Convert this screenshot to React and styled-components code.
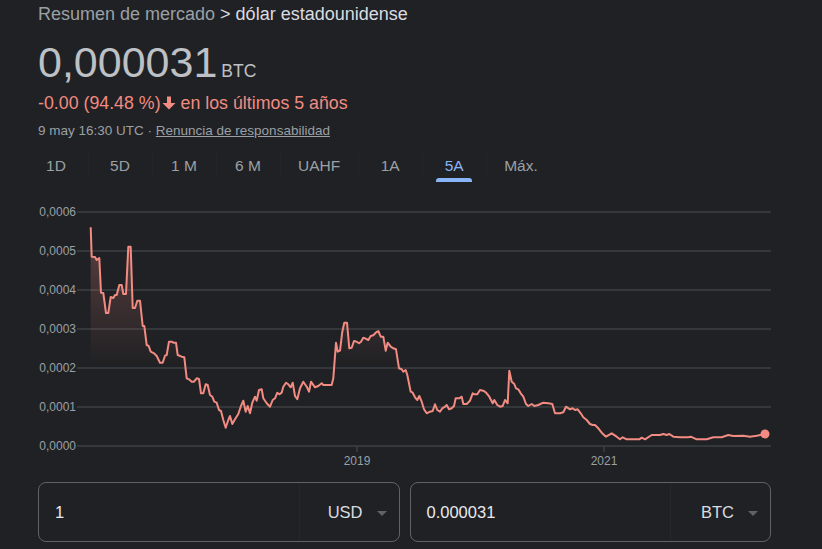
import React from 'react';
import styled, { createGlobalStyle } from 'styled-components';

const GlobalStyle = createGlobalStyle`
  html, body {
    margin: 0;
    padding: 0;
    background: #202124;
  }
  body {
    font-family: "Liberation Sans", Arial, sans-serif;
    color: #bdc1c6;
  }
`;

const Page = styled.div`
  width: 822px;
  height: 549px;
  overflow: hidden;
  background: #202124;
  display: flex;
  flex-direction: column;
`;

const Header = styled.div`
  padding: 2px 0 0 38px;
  display: flex;
  flex-direction: column;
`;

const Crumbs = styled.div`
  font-size: 18px;
  line-height: 24px;
  color: #9aa0a6;
  white-space: nowrap;

  span {
    color: #dadce0;
  }
`;

const PriceRow = styled.div`
  margin-top: 12px;
  display: flex;
  align-items: baseline;
  gap: 4px;
  height: 48px;
`;

const Price = styled.span`
  font-size: 43px;
  line-height: 48px;
  color: #bdc1c6;
`;

const Unit = styled.span`
  font-size: 17.5px;
  color: #bdc1c6;
`;

const Change = styled.div`
  margin-top: 6px;
  font-size: 17.8px;
  line-height: 22px;
  color: #f28b82;
  display: flex;
  align-items: center;
  white-space: nowrap;

  svg {
    margin: 0 5px 0 1px;
  }
`;

const Stamp = styled.div`
  margin-top: 8px;
  font-size: 13.5px;
  line-height: 18px;
  color: #9aa0a6;
  white-space: nowrap;

  a {
    color: #9aa0a6;
    text-decoration: underline;
  }
`;

const Tabs = styled.div`
  margin: 6px 0 0 24px;
  display: flex;
`;

const Tab = styled.div`
  position: relative;
  min-width: 64px;
  box-sizing: border-box;
  padding: 10px 18px 6px;
  font-size: 15.5px;
  line-height: 20px;
  text-align: center;
  color: ${p => (p.active ? '#8ab4f8' : '#9aa0a6')};
  white-space: nowrap;

  &:not(:first-child)::before {
    content: '';
    position: absolute;
    left: 0;
    top: 7px;
    bottom: 5px;
    width: 1px;
    background: #242528;
  }

  &::after {
    content: '';
    display: ${p => (p.active ? 'block' : 'none')};
    position: absolute;
    left: 50%;
    bottom: 0;
    width: 36px;
    margin-left: -18px;
    height: 4px;
    border-radius: 3px 3px 0 0;
    background: #8ab4f8;
  }
`;

const Chart = styled.svg`
  display: block;
  margin-top: 8px;
  width: 822px;
  height: 285px;
`;

const Converter = styled.div`
  margin-top: 7px;
  padding: 0 51px 0 38px;
  display: flex;
  gap: 10px;
`;

const Field = styled.div`
  flex: 1;
  height: 60px;
  box-sizing: border-box;
  border: 1px solid #5f6368;
  border-radius: 8px;
  display: grid;
  grid-template-columns: 1fr 100px;
`;

const Amount = styled.div`
  padding-left: 16px;
  display: flex;
  align-items: center;
  font-size: 16.5px;
  color: #e8eaed;
`;

const Currency = styled.div`
  border-left: 1px solid #26272a;
  display: flex;
  align-items: center;
  justify-content: flex-end;
  gap: 14px;
  padding-right: 12px;
  font-size: 16.5px;
  color: #dadce0;
`;

const Caret = styled.span`
  width: 0;
  height: 0;
  border-left: 5px solid transparent;
  border-right: 5px solid transparent;
  border-top: 5px solid #5f6368;
  margin-top: 2px;
`;

const tabs = ['1D', '5D', '1 M', '6 M', 'UAHF', '1A', '5A', 'Máx.'];

const yTicks = [
  ['0,0006', 212], ['0,0005', 251], ['0,0004', 290], ['0,0003', 329],
  ['0,0002', 368], ['0,0001', 407], ['0,0000', 446],
];

const pts = [
  [90.7, 227.3], [91.7, 256.7], [95, 257], [96.7, 260], [99.3, 258], [101, 292.7], [103.3, 293],
  [106, 313], [108.3, 313], [110.7, 297], [113.3, 298], [115, 295], [116.7, 295], [119.3, 285],
  [121.7, 285], [123.3, 294], [126, 294], [128.3, 246.7], [130.7, 246.7], [132.7, 308], [135, 308],
  [137.3, 300.7], [140, 300.7], [142.7, 326], [144.3, 326], [146.7, 345], [148.7, 346], [150.7, 351.7],
  [154, 353.3], [156.7, 356], [160, 362.7], [162.7, 362.7], [165, 355.7], [166.7, 355], [169, 341.7],
  [171.7, 341.7], [173.3, 342.7], [176, 342.7], [177.7, 355], [181.7, 356.7], [184.3, 357.3],
  [186.7, 378.3], [189, 379.3], [191.7, 381.7], [194, 381.7], [196.7, 378.3], [199, 379],
  [201, 393.3], [203.3, 393.3], [205.7, 384.3], [207.7, 385], [210, 395], [212.3, 396.7],
  [214.3, 401.7], [216.7, 402.7], [219, 410], [221, 411], [223.3, 420], [225.7, 427.7], [228.3, 420],
  [230, 416], [232.3, 424], [235, 419.3], [238.3, 414], [240.7, 406.7], [243.3, 400.7], [245.7, 411.7],
  [247.7, 406], [250, 413.3], [252.3, 402.7], [255, 396.7], [256.7, 400.7], [259, 390], [261.7, 389.3],
  [263.3, 398.3], [266.7, 403.3], [270, 406.7], [272.7, 400], [275, 398.3], [277.3, 392.7],
  [279.3, 394.3], [281.7, 392.7], [283.3, 386.7], [286, 382.7], [288.3, 384.3], [290.7, 387.3],
  [292.7, 382.7], [295, 396], [297.3, 399.3], [300, 388.3], [303.3, 381.7], [306.7, 386.7],
  [309, 391.7], [311, 381.7], [315, 387.3], [318.3, 386], [321.7, 383.3], [323.3, 385], [331.7, 385],
  [333.3, 378.3], [336, 342.7], [337.7, 351.7], [340, 350.7], [342.3, 331.7], [344.3, 322.7],
  [347, 322.7], [349.3, 348.3], [351.7, 347.7], [354, 341], [356.7, 341.7], [359, 343.3], [361, 341.7],
  [363.3, 337.7], [365.7, 338.7], [368.3, 340], [370.7, 336], [373.3, 335.3], [375.7, 332.7],
  [378.3, 331], [380.7, 336.7], [383.3, 336.7], [385.7, 350.7], [387.7, 342.7], [390.7, 346.7],
  [393.3, 348.3], [396, 349.3], [399, 368.3], [401.7, 369.3], [403.3, 371.7], [405.7, 370],
  [407.3, 375], [410.7, 391.7], [412.7, 392.7], [415, 397.3], [417.3, 400], [419.3, 396],
  [421.7, 401.7], [424, 409.3], [426.7, 413.3], [430, 411.7], [432.7, 411], [435, 404.3], [437.3, 410],
  [440, 411.7], [442.3, 408.3], [445, 406.7], [446.7, 405], [449, 409.3], [451.7, 408.3], [454, 406],
  [455.7, 398.3], [459.3, 398.3], [461.7, 396.7], [463.3, 404], [466.7, 404], [470, 400.7],
  [472.7, 393.3], [474.3, 394.3], [477.3, 394.3], [480, 390], [484, 391], [486.7, 393.3],
  [489.3, 396.7], [492.7, 403.3], [494.3, 400], [497.3, 405], [500, 406.7], [502.7, 406], [505, 400],
  [507.7, 403.3], [509.3, 370.7], [511.7, 381.7], [514.3, 384], [516, 388.3], [518.3, 389.3],
  [520.7, 393.3], [523.3, 396.7], [526, 404], [528.3, 406], [531.7, 404], [534.3, 406], [538.3, 405],
  [543.3, 402.7], [548.3, 403.3], [552.3, 404], [555, 413.3], [560, 413.3], [563.3, 412.3],
  [566, 406.7], [570, 409.3], [572.7, 408.3], [575, 410], [577.7, 409.3], [580.7, 413.3],
  [583.3, 417.3], [586.7, 420], [590, 424], [592.7, 425], [595, 425], [598.3, 428.3], [601.7, 432.7],
  [606, 436.7], [611.7, 433.3], [616.7, 436.7], [620, 439.3], [622.7, 437.3], [626.7, 439.3],
  [633.3, 439.3], [639.3, 439.3], [641.7, 437.7], [645, 439.3], [651.7, 435], [660, 435], [663.3, 434],
  [666.7, 435], [669.3, 434], [673.3, 436.7], [680, 437.3], [688.3, 437.3], [690.7, 436.7],
  [696.7, 439.3], [706.7, 439.3], [713.3, 437.3], [721.7, 437.3], [728.3, 435], [733.3, 436],
  [743.3, 435.7], [750, 436.7], [756.7, 435.7], [765, 434],
];

const linePath = pts.map(([x, y], i) => `${i ? 'L' : 'M'}${x} ${y}`).join(' ');
const areaPath = `${linePath} L765 446 L90.7 446 Z`;

function ArrowDown() {
  return (
    <svg width="14" height="14" viewBox="0 0 14 14" fill="#f28b82">
      <path d="M5 0.5h4v6.5h4.5L7 13.5 0.5 7H5z" />
    </svg>
  );
}

function PriceChart() {
  return (
    <Chart viewBox="0 190 822 285">
      <defs>
        <linearGradient id="fade" gradientUnits="userSpaceOnUse" x1="0" y1="225" x2="0" y2="365">
          <stop offset="0" stopColor="#f28b82" stopOpacity="0.3" />
          <stop offset="1" stopColor="#f28b82" stopOpacity="0" />
        </linearGradient>
      </defs>
      {yTicks.map(([label, y]) => (
        <g key={label}>
          <line x1="77" x2="771" y1={y} y2={y} stroke="#3c4043" strokeWidth="1.5" />
          <text x="76" y={y + 4} textAnchor="end" fontSize="12" fill="#9aa0a6"
            fontFamily="Liberation Sans, Arial, sans-serif">{label}</text>
        </g>
      ))}
      {[[357, '2019'], [604, '2021']].map(([x, label]) => (
        <g key={label}>
          <line x1={x} x2={x} y1="446" y2="452" stroke="#3c4043" strokeWidth="1.5" />
          <text x={x} y="465" textAnchor="middle" fontSize="12" fill="#9aa0a6"
            fontFamily="Liberation Sans, Arial, sans-serif">{label}</text>
        </g>
      ))}
      <path d={areaPath} fill="url(#fade)" />
      <path d={linePath} fill="none" stroke="#f28b82" strokeWidth="2" strokeLinejoin="round" />
      <circle cx="765" cy="434" r="4.5" fill="#f28b82" />
    </Chart>
  );
}

export default function App() {
  return (
    <Page>
      <GlobalStyle />
      <Header>
        <Crumbs>Resumen de mercado <span>&gt; dólar estadounidense</span></Crumbs>
        <PriceRow>
          <Price>0,000031</Price>
          <Unit>BTC</Unit>
        </PriceRow>
        <Change>
          -0.00 (94.48 %)<ArrowDown />en los últimos 5 años
        </Change>
        <Stamp>
          9 may 16:30 UTC · <a href="#">Renuncia de responsabilidad</a>
        </Stamp>
      </Header>
      <Tabs>
        {tabs.map(t => (
          <Tab key={t} active={t === '5A'}>{t}</Tab>
        ))}
      </Tabs>
      <PriceChart />
      <Converter>
        <Field>
          <Amount>1</Amount>
          <Currency>USD<Caret /></Currency>
        </Field>
        <Field>
          <Amount>0.000031</Amount>
          <Currency>BTC<Caret /></Currency>
        </Field>
      </Converter>
    </Page>
  );
}
